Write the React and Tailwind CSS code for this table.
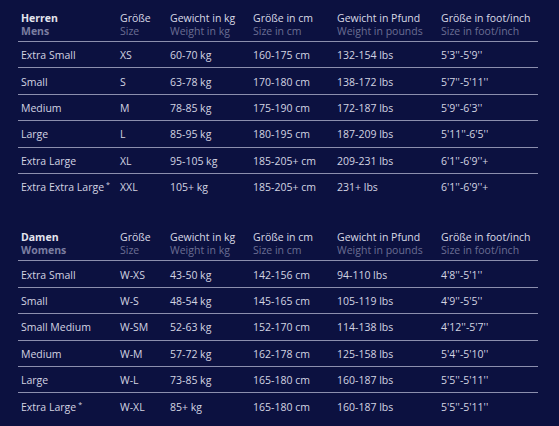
import React from "react";

const cols = "grid grid-cols-[99px_50px_83px_84px_104px_1fr]";

const men = [
  ["Extra Small", "XS", "60-70 kg", "160-175 cm", "132-154 lbs", "5'3''-5'9''"],
  ["Small", "S", "63-78 kg", "170-180 cm", "138-172 lbs", "5'7''-5'11''"],
  ["Medium", "M", "78-85 kg", "175-190 cm", "172-187 lbs", "5'9''-6'3''"],
  ["Large", "L", "85-95 kg", "180-195 cm", "187-209 lbs", "5'11''-6'5''"],
  ["Extra Large", "XL", "95-105 kg", "185-205+ cm", "209-231 lbs", "6'1''-6'9''+"],
  ["Extra Extra Large*", "XXL", "105+ kg", "185-205+ cm", "231+ lbs", "6'1''-6'9''+"],
];

const women = [
  ["Extra Small", "W-XS", "43-50 kg", "142-156 cm", "94-110 lbs", "4'8''-5'1''"],
  ["Small", "W-S", "48-54 kg", "145-165 cm", "105-119 lbs", "4'9''-5'5''"],
  ["Small Medium", "W-SM", "52-63 kg", "152-170 cm", "114-138 lbs", "4'12''-5'7''"],
  ["Medium", "W-M", "57-72 kg", "162-178 cm", "125-158 lbs", "5'4''-5'10''"],
  ["Large", "W-L", "73-85 kg", "165-180 cm", "160-187 lbs", "5'5''-5'11''"],
  ["Extra Large*", "W-XL", "85+ kg", "165-180 cm", "160-187 lbs", "5'5''-5'11''"],
];

function Cell({ text }) {
  if (text.endsWith("*")) {
    return (
      <span className="whitespace-nowrap">
        {text.slice(0, -1)}
        <span className="inline-block align-top text-[7px] leading-[7px] ml-[2px] mt-[1px]">*</span>
      </span>
    );
  }
  return <span className="whitespace-nowrap">{text}</span>;
}

function SizeTable({ de, en, rows }) {
  const heads = [
    ["Größe", "Size"],
    ["Gewicht in kg", "Weight in kg"],
    ["Größe in cm", "Size in cm"],
    ["Gewicht in Pfund", "Weight in pounds"],
    ["Größe in foot/inch", "Size in foot/inch"],
  ];
  return (
    <div className="w-[520px]">
      <div className={`${cols} pl-[3px] pb-[4px] leading-[12.5px]`}>
        <div>
          <div className="font-bold text-[#e4e5ee]">{de}</div>
          <div className="font-bold text-[#7b7ea0]">{en}</div>
        </div>
        {heads.map(([a, b]) => (
          <div key={a}>
            <div className="text-[#d9dae6]">{a}</div>
            <div className="text-[#6b6e93]">{b}</div>
          </div>
        ))}
      </div>
      {rows.map((r, i) => (
        <div
          key={i}
          className={`${cols} pl-[3px] pt-[3px] h-[26.4px] items-center border-t-[1.5px] border-[#8c8fae] text-[#d3d4e2]`}
        >
          {r.map((c, j) => (
            <Cell key={j} text={c} />
          ))}
        </div>
      ))}
    </div>
  );
}

export default function App() {
  return (
    <div
      className="w-[559px] h-[426px] bg-[#0c1140] pt-[12px] pl-[18px] text-[10.5px] overflow-hidden"
      style={{ fontFamily: '"Open Sans", "Noto Sans", sans-serif' }}
    >
      <div className="flex flex-col gap-[32px]">
        <SizeTable de="Herren" en="Mens" rows={men} />
        <SizeTable de="Damen" en="Womens" rows={women} />
      </div>
    </div>
  );
}
